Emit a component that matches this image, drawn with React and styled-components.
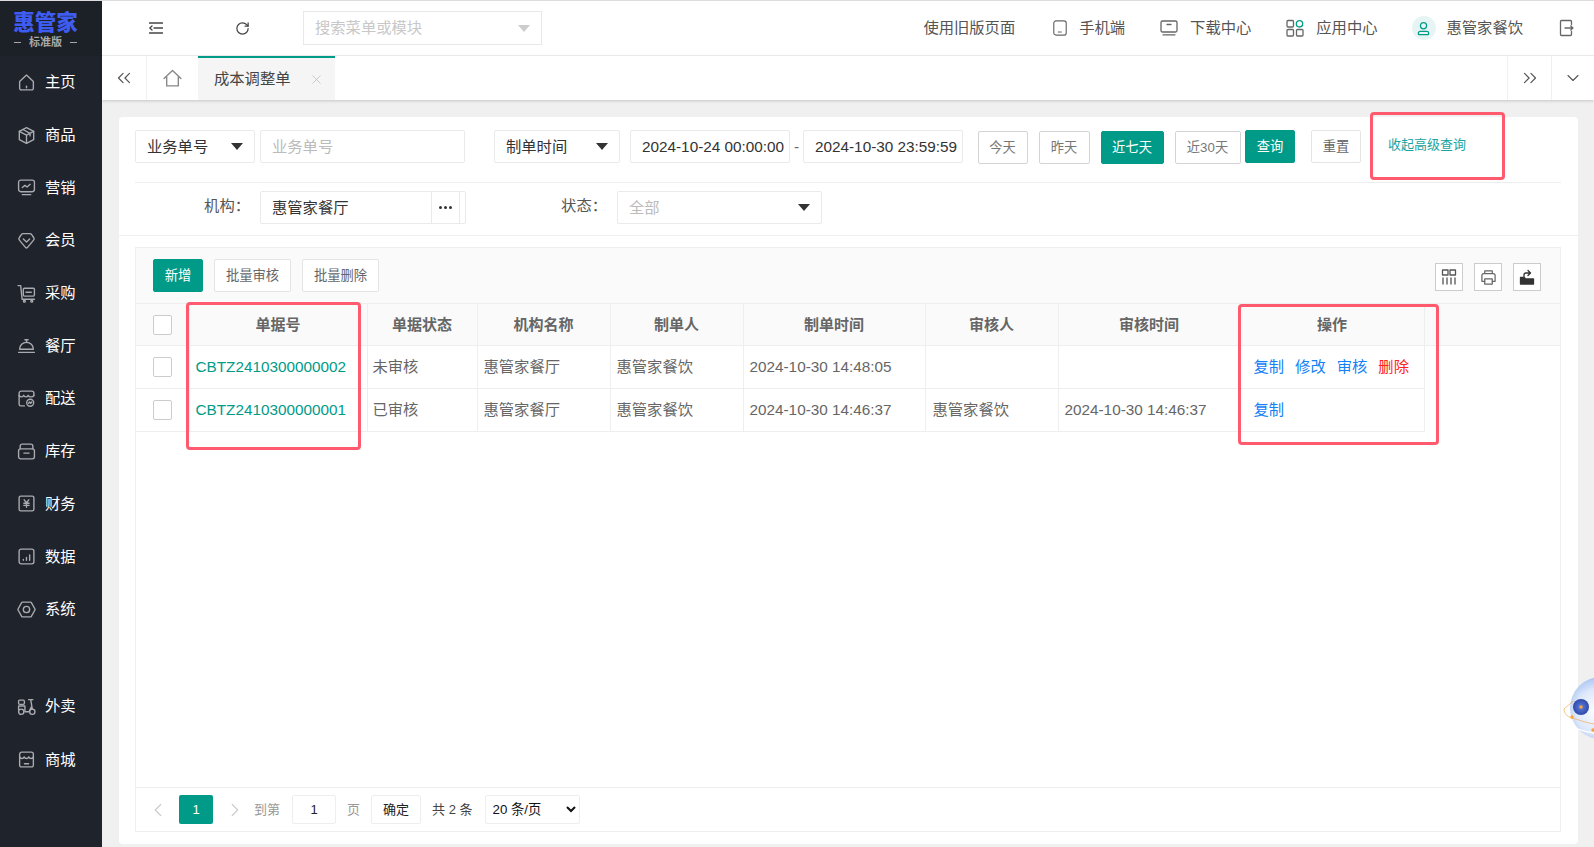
import React from 'react';
import styled, { createGlobalStyle } from 'styled-components';
import { ChevronDown, ChevronLeft, ChevronRight, ChevronsLeft, ChevronsRight, RotateCw, X } from 'lucide-react';

const TEAL = '#009b88';

const GlobalStyle = createGlobalStyle`
  html, body {
    margin: 0;
    padding: 0;
    height: 100%;
    overflow: hidden;
    background: #f0f0f0;
    font-family: "Liberation Sans", "Noto Sans CJK SC", sans-serif;
    font-size: 15.3px;
    line-height: 20px;
    color: #333;
  }
  * { box-sizing: border-box; }
`;

const Page = styled.div`
  position: relative;
  display: flex;
  width: 100vw;
  height: 847px;
  overflow: hidden;
  border-top: 1px solid #dcdcdc;
`;

const Sidebar = styled.aside`
  width: 102px;
  flex-shrink: 0;
  background: #1f232c;
  display: flex;
  flex-direction: column;
`;

const Logo = styled.div`
  height: 55px;
  background: #1c2027;
  display: flex;
  flex-direction: column;
  align-items: center;
  padding: 9px 11px 0 0;
`;

const LogoName = styled.div`
  color: #3f5cf0;
  font-size: 21.5px;
  font-weight: 900;
  line-height: 26px;
`;

const LogoSub = styled.div`
  color: #a8a8a8;
  font-size: 11px;
  font-weight: bold;
  line-height: 14px;
  margin-top: -1px;
  display: flex;
  gap: 8px;
  &::before, &::after {
    content: '';
    width: 7px;
    height: 1px;
    background: #a8a8a8;
    align-self: center;
  }
`;

const NavItem = styled.div`
  height: 52.7px;
  flex-shrink: 0;
  display: flex;
  align-items: center;
  padding-left: 17px;
  gap: 9px;
  color: #fff;
  margin-top: ${p => p.$gap || 0}px;
`;

const NavIcon = styled.svg`
  width: 19px;
  height: 19px;
  fill: none;
  stroke: #a9abb0;
  stroke-width: 1.3;
  stroke-linecap: round;
  stroke-linejoin: round;
  flex-shrink: 0;
`;

const Main = styled.div`
  flex: 1;
  min-width: 0;
  display: flex;
  flex-direction: column;
`;

const TopBar = styled.header`
  height: 55px;
  flex-shrink: 0;
  background: #fff;
  border-bottom: 1px solid #f0f0f0;
  display: flex;
  align-items: center;
  padding: 0 19px 0 47px;
`;

const TopTool = styled.span`
  display: flex;
  color: #444;
  margin-left: ${p => p.$ml || 0}px;
`;

const MenuSearch = styled.div`
  width: 239px;
  height: 34px;
  margin-left: 53px;
  border: 1px solid #e8e8e8;
  display: flex;
  align-items: center;
  justify-content: space-between;
  padding: 0 11px;
  color: #c8c8c8;
`;

const Caret = styled.i`
  display: block;
  width: 0;
  height: 0;
  border-left: 6px solid transparent;
  border-right: 6px solid transparent;
  border-top: 7px solid ${p => p.$color || '#333'};
`;

const TopRight = styled.div`
  margin-left: auto;
  display: flex;
  align-items: center;
  color: #555;
`;

const TopItem = styled.div`
  display: flex;
  align-items: center;
  gap: ${p => p.$gap || 12}px;
  margin-left: ${p => p.$ml || 0}px;
`;

const TopIcon = styled.svg`
  width: ${p => p.$size || 18}px;
  height: ${p => p.$size || 18}px;
  fill: none;
  stroke: ${p => p.$stroke || '#666'};
  stroke-width: 1.3;
  stroke-linecap: round;
  stroke-linejoin: round;
  flex-shrink: 0;
`;

const Avatar = styled.span`
  width: 24px;
  height: 24px;
  border-radius: 50%;
  background: #e6f5f3;
  display: flex;
  align-items: center;
  justify-content: center;
`;

const TabBar = styled.nav`
  height: 44px;
  flex-shrink: 0;
  background: #fff;
  display: flex;
  box-shadow: 0 1px 3px rgba(0, 0, 0, 0.18);
  z-index: 1;
`;

const TabCell = styled.div`
  width: ${p => p.$w}px;
  flex-shrink: 0;
  display: flex;
  align-items: center;
  justify-content: center;
  color: #555;
  border-right: ${p => (p.$line ? '1px solid #f0f0f0' : 'none')};
  border-left: ${p => (p.$lineLeft ? '1px solid #f0f0f0' : 'none')};
  margin-left: ${p => (p.$push ? 'auto' : 0)};
`;

const ActiveTab = styled.div`
  width: 137px;
  background: #f5f5f5;
  border-top: 2px solid ${TEAL};
  display: flex;
  align-items: center;
  padding: 0 11px 0 16px;
  justify-content: space-between;
  color: #444;
`;

const Content = styled.main`
  flex: 1;
  min-height: 0;
  padding: 17px 16px 3px 17px;
  display: flex;
`;

const Card = styled.section`
  flex: 1;
  min-width: 0;
  background: #fff;
  border-radius: 4px;
  display: flex;
  flex-direction: column;
`;

const FilterRow = styled.div`
  height: 66px;
  flex-shrink: 0;
  margin: 0 17px 0 16px;
  padding-top: 13px;
  border-bottom: 1px solid #eee;
  display: flex;
  align-items: flex-start;
`;

const FilterRowTwo = styled.div`
  height: 53px;
  flex-shrink: 0;
  padding: 8px 0 0 16px;
  border-bottom: 1px solid #f0f0f0;
  display: flex;
  align-items: flex-start;
`;

const Field = styled.div`
  width: ${p => p.$w}px;
  height: 33px;
  flex-shrink: 0;
  margin-left: ${p => p.$ml || 0}px;
  border: 1px solid #eaeaea;
  border-radius: 2px;
  padding: 0 11px;
  display: flex;
  align-items: center;
  justify-content: space-between;
  color: ${p => (p.$muted ? '#bbb' : '#333')};
  white-space: nowrap;
`;

const Dash = styled.span`
  width: 13px;
  flex-shrink: 0;
  text-align: center;
  line-height: 33px;
  color: #666;
`;

const OrgField = styled.div`
  width: 205.5px;
  height: 33px;
  flex-shrink: 0;
  border: 1px solid #eaeaea;
  border-radius: 2px;
  display: flex;
  align-items: center;
  padding-left: 11px;
`;

const OrgName = styled.span`
  flex: 1;
`;

const OrgDots = styled.span`
  width: 29px;
  height: 100%;
  border-left: 1px solid #eaeaea;
  border-right: 1px solid #eaeaea;
  margin-right: 5px;
  display: flex;
  align-items: center;
  justify-content: center;
  gap: 2px;
  & i {
    width: 3px;
    height: 3px;
    border-radius: 50%;
    background: #333;
  }
`;

const FieldLabel = styled.span`
  width: ${p => p.$w}px;
  flex-shrink: 0;
  margin-left: ${p => p.$ml || 0}px;
  margin-right: 10px;
  text-align: right;
  line-height: 29px;
  color: #555;
`;

const QuickBtn = styled.button`
  width: ${p => p.$w}px;
  height: 33px;
  flex-shrink: 0;
  margin: 1px 0 0 ${p => p.$ml}px;
  padding: 0;
  font: inherit;
  font-size: 13.3px;
  border-radius: 2px;
  border: 1px solid ${p => (p.$on ? TEAL : '#d4d4d4')};
  background: ${p => (p.$on ? TEAL : '#fff')};
  color: ${p => (p.$on ? '#fff' : '#777')};
`;

const ActionBtn = styled(QuickBtn)`
  margin-top: 0;
  border-color: ${p => (p.$on ? TEAL : '#e4e4e4')};
  color: ${p => (p.$on ? '#fff' : '#666')};
`;

const CollapseLink = styled.a`
  margin-left: 27px;
  font-size: 13px;
  line-height: 30px;
  color: #1ba3a0;
`;

const Panel = styled.div`
  flex: 1;
  min-height: 0;
  margin: 11px 17px 12px 16px;
  border: 1px solid #eee;
  display: flex;
  flex-direction: column;
`;

const Toolbar = styled.div`
  height: 55px;
  flex-shrink: 0;
  background: #fafafa;
  display: flex;
  align-items: center;
  padding: 0 19px 0 17px;
`;

const ToolbarIcons = styled.div`
  margin: 3px 0 0 auto;
  display: flex;
  gap: 11px;
`;

const IconBtn = styled.span`
  width: 28px;
  height: 28px;
  border: 1px solid #ccc;
  background: #fff;
  display: flex;
  align-items: center;
  justify-content: center;
`;

const TableWrap = styled.div`
  flex: 1;
  min-height: 0;
`;

const Table = styled.table`
  width: 100%;
  table-layout: fixed;
  border-collapse: collapse;
  color: #666;
`;

const Th = styled.th`
  height: 42px;
  background: #fafafa;
  border: 1px solid #eee;
  border-left: none;
  font-weight: bold;
  font-size: 15px;
  text-align: center;
  color: #666;
  padding: 0;
  &:last-child { border-right: none; }
`;

const Td = styled.td`
  height: 43px;
  border: 1px solid #eee;
  border-left: none;
  padding: 0 0 0 ${p => p.$pad ?? 6}px;
  white-space: nowrap;
  color: ${p => (p.$teal ? TEAL : '#666')};
`;

const CheckBox = styled.span`
  display: block;
  width: 19px;
  height: 20px;
  margin: 0 auto;
  border: 1px solid #ccc;
  border-radius: 2px;
  background: #fff;
`;

const OpLink = styled.a`
  margin-right: 11px;
  color: ${p => (p.$danger ? '#f22' : '#1581f5')};
`;

const Pager = styled.div`
  height: 44px;
  flex-shrink: 0;
  border-top: 1px solid #eee;
  display: flex;
  align-items: center;
  padding-left: 11px;
  font-size: 13px;
`;

const PageArrow = styled.span`
  display: flex;
  color: #ccc;
  margin-left: ${p => p.$ml || 0}px;
`;

const PageNo = styled.span`
  width: 34px;
  height: 29px;
  margin-left: 10px;
  background: ${TEAL};
  color: #fff;
  border-radius: 2px;
  display: flex;
  align-items: center;
  justify-content: center;
`;

const PagerText = styled.span`
  margin-left: ${p => p.$ml}px;
  color: ${p => p.$color || '#999'};
`;

const PagerBox = styled.span`
  width: ${p => p.$w}px;
  height: 29px;
  margin-left: ${p => p.$ml}px;
  border: 1px solid #eee;
  border-radius: 2px;
  display: flex;
  align-items: center;
  justify-content: center;
  color: #222;
`;

const PageSize = styled.select`
  width: 95px;
  height: 29px;
  margin-left: 12px;
  padding-left: 3px;
  border: 1px solid #eee;
  border-radius: 2px;
  background: #fff;
  font: inherit;
  font-size: 13.3px;
  color: #111;
  outline: none;
`;

const Mark = styled.div`
  position: absolute;
  left: ${p => p.$x}px;
  top: ${p => p.$y}px;
  width: ${p => p.$w}px;
  height: ${p => p.$h}px;
  border: 3px solid #ff5a6e;
  border-radius: 4px;
  pointer-events: none;
  z-index: 3;
`;

const Orb = styled.svg`
  position: absolute;
  left: 1554px;
  top: 666px;
  width: 40px;
  height: 80px;
  z-index: 2;
`;

const navTop = [
  ['主页', <><path d="M2.5 8 9 2l6.5 6v6.5A1.5 1.5 0 0 1 14 16H4a1.5 1.5 0 0 1-1.5-1.5Z" /><path d="M9 12.5V14" /></>],
  ['商品', <><path d="M9 1.5 15.8 5v8L9 16.5 2.2 13V5Z" /><path d="M2.2 5 9 8.6 15.8 5M9 8.6v7.9M5.6 3.3l6.8 3.6v2.5" /></>],
  ['营销', <><rect x="1.5" y="2" width="15" height="11" rx="2" /><path d="m5 9 2.5-2 2 1.5 3-2.5M5 15.8h8" /></>],
  ['会员', <><path d="M5.8 2.5h6.4c.7 0 1.3.3 1.7.9l2 3c.5.7.4 1.6-.2 2.2l-5.900 7.100c-.4.4-1.200.4-1.600 0L2.300 8.600c-.6-.6-.7-1.500-.2-2.200l2-3c.4-.6 1-.9 1.700-.9Z" /><path d="M6 7.500 9 10.500 12 7.500" /></>],
  ['采购', <><path d="M1 1.500h2.500l1.400 13h11.600" /><rect x="6" y="4" width="10.500" height="7.500" rx="1" /><path d="M8.500 7.800h5" /><circle cx="7" cy="16.300" r=".9" /><circle cx="14" cy="16.300" r=".9" /></>],
  ['餐厅', <><path d="M2.500 12.500a6.500 6.500 0 0 1 13 0Z" /><path d="M9 6V3.500M7.500 3.500h3M1.500 15.500h15" /></>],
  ['配送', <><path d="M2 6.500V4a2 2 0 0 1 2-2h10a2 2 0 0 1 2 2v2.500" /><path d="M2 6c.8 2 3.300 2 4.300 0 .8 2 3.300 2 4.300 0 1 2 4.400 2 5.400 0M2 6v8.500A1.500 1.500 0 0 0 3.500 16H7" /><circle cx="12.500" cy="13" r="3.300" /><path d="m11 13.500 1-1.200 1 1.200 1-1.200" /></>],
  ['库存', <><path d="M3 6.500V4a2 2 0 0 1 2-2h8a2 2 0 0 1 2 2v2.500" /><rect x="1.500" y="6.500" width="15" height="9.500" rx="2" /><path d="M6.500 10.500h5" /></>],
  ['财务', <><rect x="2" y="2" width="14" height="14" rx="1.500" /><path d="M6.800 5.500 9 8.300l2.200-2.800M9 8.300v4.200M6.500 8.800h5M6.500 10.800h5" /></>],
  ['数据', <><rect x="2" y="2" width="14" height="14" rx="2" /><path d="M6 12.500v-.8M9 12.500V10M12 12.500V7.500" /></>],
  ['系统', <><path d="M5.300 2h7.400a1 1 0 0 1 .9.500l3.400 6a1 1 0 0 1 0 1l-3.400 6a1 1 0 0 1-.9.500H5.300a1 1 0 0 1-.9-.500L1 9.500a1 1 0 0 1 0-1l3.400-6a1 1 0 0 1 .9-.500Z" /><circle cx="9" cy="9" r="3" /></>],
];

const navBottom = [
  ['外卖', <><rect x="1.500" y="3" width="5.500" height="4" rx="1" /><circle cx="4" cy="14" r="2.500" /><circle cx="14.500" cy="14" r="2.500" /><path d="M11 2.500h4M13 2.500l1.500 9M1.500 12V8.500h6V14h4l2-4.500" /></>],
  ['商城', <><path d="M2.500 4a2 2 0 0 1 2-2h9a2 2 0 0 1 2 2v10.500a1.500 1.500 0 0 1-1.500 1.500H4a1.500 1.500 0 0 1-1.500-1.500Z" /><path d="M2.500 6.500c1 2 3.400 2 4.300 0 .9 2 3.500 2 4.400 0 .9 2 3.300 2 4.300 0M7 13h4" /></>],
];

const filterBtns = [
  { text: '今天', w: 50, ml: 14.5 },
  { text: '昨天', w: 51, ml: 11 },
  { text: '近七天', w: 63, ml: 11, on: true },
  { text: '近30天', w: 66, ml: 11 },
];

const colWidths = [53, 178, 110, 133, 133, 182, 133, 182, 184];
const headers = ['单据号', '单据状态', '机构名称', '制单人', '制单时间', '审核人', '审核时间', '操作'];

const rows = [
  {
    no: 'CBTZ2410300000002', status: '未审核', org: '惠管家餐厅', maker: '惠管家餐饮',
    made: '2024-10-30 14:48:05', auditor: '', audited: '',
    ops: ['复制', '修改', '审核', '删除'],
  },
  {
    no: 'CBTZ2410300000001', status: '已审核', org: '惠管家餐厅', maker: '惠管家餐饮',
    made: '2024-10-30 14:46:37', auditor: '惠管家餐饮', audited: '2024-10-30 14:46:37',
    ops: ['复制'],
  },
];

const NavRow = ({ label, icon, gap }) => (
  <NavItem $gap={gap}>
    <NavIcon viewBox="0 0 18 18">{icon}</NavIcon>
    {label}
  </NavItem>
);

export default function App() {
  return (
    <Page>
      <GlobalStyle />
      <Sidebar>
        <Logo>
          <LogoName>惠管家</LogoName>
          <LogoSub>标准版</LogoSub>
        </Logo>
        {navTop.map(([label, icon]) => <NavRow key={label} label={label} icon={icon} />)}
        {navBottom.map(([label, icon], i) => (
          <NavRow key={label} label={label} icon={icon} gap={i === 0 ? 44.5 : 0.5} />
        ))}
      </Sidebar>

      <Main>
        <TopBar>
          <TopTool>
            <TopIcon viewBox="0 0 14 14" $size={14} $stroke="#444">
              <path d="M0.500 2h13M5 7h8.500M0.500 12h13M3 5 0.800 7 3 9" />
            </TopIcon>
          </TopTool>
          <TopTool $ml={72}><RotateCw size={15} strokeWidth={2} /></TopTool>
          <MenuSearch>
            搜索菜单或模块
            <Caret $color="#ccc" />
          </MenuSearch>
          <TopRight>
            <TopItem>使用旧版页面</TopItem>
            <TopItem $ml={37} $gap={11}>
              <TopIcon viewBox="0 0 16 18" $size={16}>
                <rect x="1" y="1" width="14" height="16" rx="2.500" />
                <path d="M6 13.500h3.500" />
              </TopIcon>
              手机端
            </TopItem>
            <TopItem $ml={35}>
              <TopIcon viewBox="0 0 18 18">
                <rect x="1" y="2" width="16" height="11" rx="1.500" />
                <path d="M7 5.500h4M3 15.800h12" />
              </TopIcon>
              下载中心
            </TopItem>
            <TopItem $ml={35}>
              <TopIcon viewBox="0 0 18 18">
                <rect x="1" y="1.500" width="6.500" height="6.500" rx="1" />
                <circle cx="13.500" cy="4.800" r="3.200" stroke={TEAL} />
                <rect x="1" y="10.500" width="6.500" height="6.500" rx="1" />
                <rect x="10.500" y="10.500" width="6.500" height="6.500" rx="1" />
              </TopIcon>
              应用中心
            </TopItem>
            <TopItem $ml={34} $gap={11}>
              <Avatar>
                <TopIcon viewBox="0 0 16 16" $size={15} $stroke={TEAL}>
                  <circle cx="8" cy="5" r="3.300" />
                  <path d="M2.500 13a2 2 0 0 1 2-2h7a2 2 0 0 1 2 2v.5a1 1 0 0 1-1 1h-9a1 1 0 0 1-1-1Z" />
                </TopIcon>
              </Avatar>
              惠管家餐饮
            </TopItem>
            <TopItem $ml={34}>
              <TopIcon viewBox="0 0 14 18" $size={18}>
                <path d="M12.500 5.500V2.500a1 1 0 0 0-1-1h-9a1 1 0 0 0-1 1v13a1 1 0 0 0 1 1h9a1 1 0 0 0 1-1v-3" />
                <path d="M6 9h8M11.800 7l2 2-2 2" />
              </TopIcon>
            </TopItem>
          </TopRight>
        </TopBar>

        <TabBar>
          <TabCell $w={45} $line><ChevronsLeft size={22} strokeWidth={1.3} /></TabCell>
          <TabCell $w={51}>
            <TopIcon viewBox="0 0 18 18" $size={19} $stroke="#888">
              <path d="M1 9 9 1.500 17 9M3.500 7.500v8.500h11V7.500" />
            </TopIcon>
          </TabCell>
          <ActiveTab>
            成本调整单
            <X size={15} strokeWidth={1.2} color="#bbb" />
          </ActiveTab>
          <TabCell $w={44} $push $lineLeft><ChevronsRight size={22} strokeWidth={1.3} /></TabCell>
          <TabCell $w={43} $lineLeft><ChevronDown size={20} strokeWidth={1.3} /></TabCell>
        </TabBar>

        <Content>
          <Card>
            <FilterRow>
              <Field $w={120}>业务单号<Caret /></Field>
              <Field $w={205} $ml={5} $muted>业务单号</Field>
              <Field $w={126} $ml={29}>制单时间<Caret /></Field>
              <Field $w={160} $ml={10}>2024-10-24 00:00:00</Field>
              <Dash>-</Dash>
              <Field $w={160}>2024-10-30 23:59:59</Field>
              {filterBtns.map(b => (
                <QuickBtn key={b.text} $w={b.w} $ml={b.ml} $on={b.on}>{b.text}</QuickBtn>
              ))}
              <ActionBtn $w={50} $ml={4.500} $on>查询</ActionBtn>
              <ActionBtn $w={50} $ml={16}>重置</ActionBtn>
              <CollapseLink>收起高级查询</CollapseLink>
            </FilterRow>

            <FilterRowTwo>
              <FieldLabel $w={46} $ml={69}>机构：</FieldLabel>
              <OrgField>
                <OrgName>惠管家餐厅</OrgName>
                <OrgDots><i /><i /><i /></OrgDots>
              </OrgField>
              <FieldLabel $w={46} $ml={95.500}>状态：</FieldLabel>
              <Field $w={204.500} $muted>全部<Caret /></Field>
            </FilterRowTwo>

            <Panel>
              <Toolbar>
                <ActionBtn $w={50} $ml={0} $on>新增</ActionBtn>
                <ActionBtn $w={77} $ml={11}>批量审核</ActionBtn>
                <ActionBtn $w={77} $ml={11}>批量删除</ActionBtn>
                <ToolbarIcons>
                  <IconBtn>
                    <TopIcon viewBox="0 0 16 16" $size={16} $stroke="#555">
                      <rect x="1.500" y="1" width="5.500" height="5" />
                      <rect x="9" y="1" width="5.500" height="5" />
                      <path d="M2 9v6M6 9v6M10 9v6M14 9v6" />
                    </TopIcon>
                  </IconBtn>
                  <IconBtn>
                    <TopIcon viewBox="0 0 18 18" $size={17}>
                      <path d="M5 5V2h8v3M5 13H2V7a2 2 0 0 1 2-2h10a2 2 0 0 1 2 2v6h-3" />
                      <rect x="5" y="10.500" width="8" height="5.500" />
                    </TopIcon>
                  </IconBtn>
                  <IconBtn>
                    <TopIcon viewBox="0 0 16 16" $size={16} $stroke="#333">
                      <path d="M1.500 8.500h4l1 1.500h8v5h-13Z" fill="#333" />
                      <path d="M5 7.500V6a2 2 0 0 1 2-2h4M9 1.500 11.500 4 9 6.500" />
                    </TopIcon>
                  </IconBtn>
                </ToolbarIcons>
              </Toolbar>

              <TableWrap>
                <Table>
                  <colgroup>
                    {colWidths.map((w, i) => <col key={i} width={w} />)}
                    <col />
                  </colgroup>
                  <thead>
                    <tr>
                      <Th><CheckBox /></Th>
                      {headers.map(h => <Th key={h}>{h}</Th>)}
                      <Th />
                    </tr>
                  </thead>
                  <tbody>
                    {rows.map(r => (
                      <tr key={r.no}>
                        <Td $pad={0}><CheckBox /></Td>
                        <Td $teal>{r.no}</Td>
                        <Td $pad={5}>{r.status}</Td>
                        <Td>{r.org}</Td>
                        <Td>{r.maker}</Td>
                        <Td>{r.made}</Td>
                        <Td $pad={7}>{r.auditor}</Td>
                        <Td>{r.audited}</Td>
                        <Td $pad={13}>
                          {r.ops.map(op => <OpLink key={op} $danger={op === '删除'}>{op}</OpLink>)}
                        </Td>
                      </tr>
                    ))}
                  </tbody>
                </Table>
              </TableWrap>

              <Pager>
                <PageArrow><ChevronLeft size={22} strokeWidth={1.3} /></PageArrow>
                <PageNo>1</PageNo>
                <PageArrow $ml={11}><ChevronRight size={22} strokeWidth={1.3} /></PageArrow>
                <PagerText $ml={8}>到第</PagerText>
                <PagerBox $w={44} $ml={12}>1</PagerBox>
                <PagerText $ml={11}>页</PagerText>
                <PagerBox $w={50} $ml={11}>确定</PagerBox>
                <PagerText $ml={11} $color="#444">共 2 条</PagerText>
                <PageSize defaultValue="20">
                  <option value="20">20 条/页</option>
                  <option value="50">50 条/页</option>
                </PageSize>
              </Pager>
            </Panel>
          </Card>
        </Content>
      </Main>

      <Mark $x={1370} $y={111} $w={135} $h={68} />
      <Mark $x={186} $y={301} $w={175} $h={148} />
      <Mark $x={1238} $y={303} $w={201} $h={141} />

      <Orb viewBox="0 0 40 80">
        <defs>
          <radialGradient id="orbFill" cx="0.450" cy="0.550" r="0.650">
            <stop offset="0" stopColor="#ffffff" />
            <stop offset="0.550" stopColor="#dde8fb" />
            <stop offset="1" stopColor="#8fb2ec" />
          </radialGradient>
          <radialGradient id="orbEye" cx="0.500" cy="0.500" r="0.500">
            <stop offset="0" stopColor="#5f7fe0" />
            <stop offset="1" stopColor="#2f49a8" />
          </radialGradient>
        </defs>
        <circle cx="47" cy="41" r="31" fill="url(#orbFill)" />
        <circle cx="27" cy="40" r="8" fill="url(#orbEye)" />
        <circle cx="27" cy="40" r="1.800" fill="#f5a53a" />
        <path d="M19 34 10 42c0 4 3 8 8 9 8 2 14 5 22 6" fill="none" stroke="#f5b36a" strokeWidth="0.800" />
        <path d="M16 58c4 3 10 6 24 8" fill="none" stroke="#ffffff" strokeWidth="1.500" />
        <circle cx="18" cy="50" r="1.700" fill="#f5a53a" />
        <circle cx="39" cy="63" r="1.700" fill="#f5a53a" />
      </Orb>
    </Page>
  );
}
